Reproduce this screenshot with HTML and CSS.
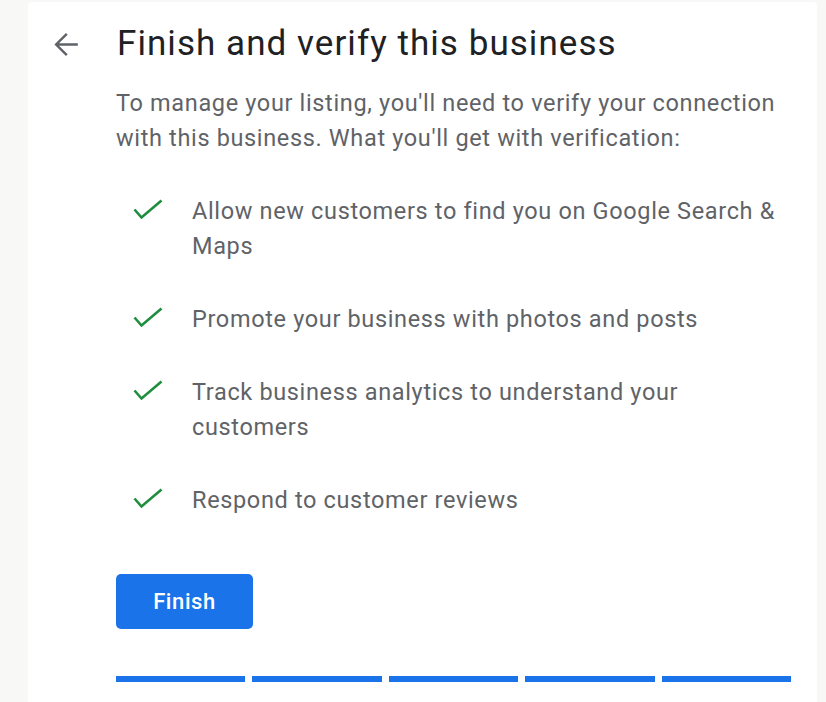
FILE: index.html
```html
<!DOCTYPE html>
<html>
<head>
<meta charset="utf-8">
<link rel="stylesheet" href="styles.css">
</head>
<body>
<div class="card">
  <div class="header">
    <button class="back" aria-label="Back">
      <svg width="37" height="37" viewBox="0 0 24 24"><path d="M20 11.2H7.8l5.6-5.6L12.3 4.5 4.8 12l7.5 7.5 1.1-1.1-5.6-5.6H20v-1.6z" fill="#5f6368"/></svg>
    </button>
    <h1 class="title">Finish and verify this business</h1>
  </div>
  <div class="body">
    <p class="intro">To manage your listing, you'll need to verify your connection with this business. What you'll get with verification:</p>
    <ul class="benefits">
      <li><svg class="check" viewBox="0 0 30 22"><polyline points="1.5,10.5 8.5,18.5 28.5,1.5" fill="none" stroke="#1e8e3e" stroke-width="2.6"/></svg><span>Allow new customers to find you on Google Search &amp; Maps</span></li>
      <li><svg class="check" viewBox="0 0 30 22"><polyline points="1.5,10.5 8.5,18.5 28.5,1.5" fill="none" stroke="#1e8e3e" stroke-width="2.6"/></svg><span>Promote your business with photos and posts</span></li>
      <li><svg class="check" viewBox="0 0 30 22"><polyline points="1.5,10.5 8.5,18.5 28.5,1.5" fill="none" stroke="#1e8e3e" stroke-width="2.6"/></svg><span>Track business analytics to understand your customers</span></li>
      <li><svg class="check" viewBox="0 0 30 22"><polyline points="1.5,10.5 8.5,18.5 28.5,1.5" fill="none" stroke="#1e8e3e" stroke-width="2.6"/></svg><span>Respond to customer reviews</span></li>
    </ul>
    <button class="finish">Finish</button>
    <div class="progress">
      <span></span><span></span><span></span><span></span><span></span>
    </div>
  </div>
</div>
</body>
</html>
```
FILE: styles.css
```css
html, body {
  margin: 0;
  padding: 0;
  background: #f8f8f7;
  height: 100%;
}
body {
  font-family: Roboto, "Liberation Sans", sans-serif;
  overflow: hidden;
}
.card {
  margin: 2px 9px 0 28px;
  background: #fff;
  border-radius: 4px;
  height: 720px;
  box-sizing: border-box;
  padding-top: 20px;
}
.header {
  display: flex;
  align-items: center;
  padding-left: 19px;
}
.back {
  border: none;
  background: none;
  padding: 0;
  width: 37px;
  height: 37px;
  display: flex;
  align-items: center;
  justify-content: center;
  margin-right: 33px;
}
.back svg {
  display: block;
}
.title {
  margin: 0;
  font-weight: 400;
  font-size: 35px;
  letter-spacing: 1.05px;
  line-height: 44px;
  color: #202124;
}
.body {
  padding-left: 88px;
  padding-right: 27px;
}
.intro {
  margin: 20px 0 0;
  font-size: 23.5px;
  letter-spacing: 0.65px;
  line-height: 35px;
  color: #5f6368;
}
.benefits {
  list-style: none;
  margin: 38px 0 0;
  padding: 0 0 0 17px;
  display: flex;
  flex-direction: column;
  gap: 38px;
}
.benefits li {
  display: flex;
  align-items: flex-start;
  font-size: 23.5px;
  letter-spacing: 0.65px;
  line-height: 35px;
  color: #5f6368;
}
.check {
  width: 30px;
  height: 22px;
  flex: none;
  margin: 5px 29px 0 0;
}
.finish {
  display: block;
  margin-top: 56px;
  width: 137px;
  height: 55px;
  background: #1a73e8;
  border: none;
  border-radius: 5px;
  color: #fff;
  font-family: Roboto, "Liberation Sans", sans-serif;
  font-weight: 500;
  font-size: 22px;
  letter-spacing: 0.6px;
}
.progress {
  display: flex;
  gap: 7px;
  margin-top: 47px;
  width: 675px;
}
.progress span {
  flex: 1;
  height: 6px;
  background: #1a73e8;
}
```
